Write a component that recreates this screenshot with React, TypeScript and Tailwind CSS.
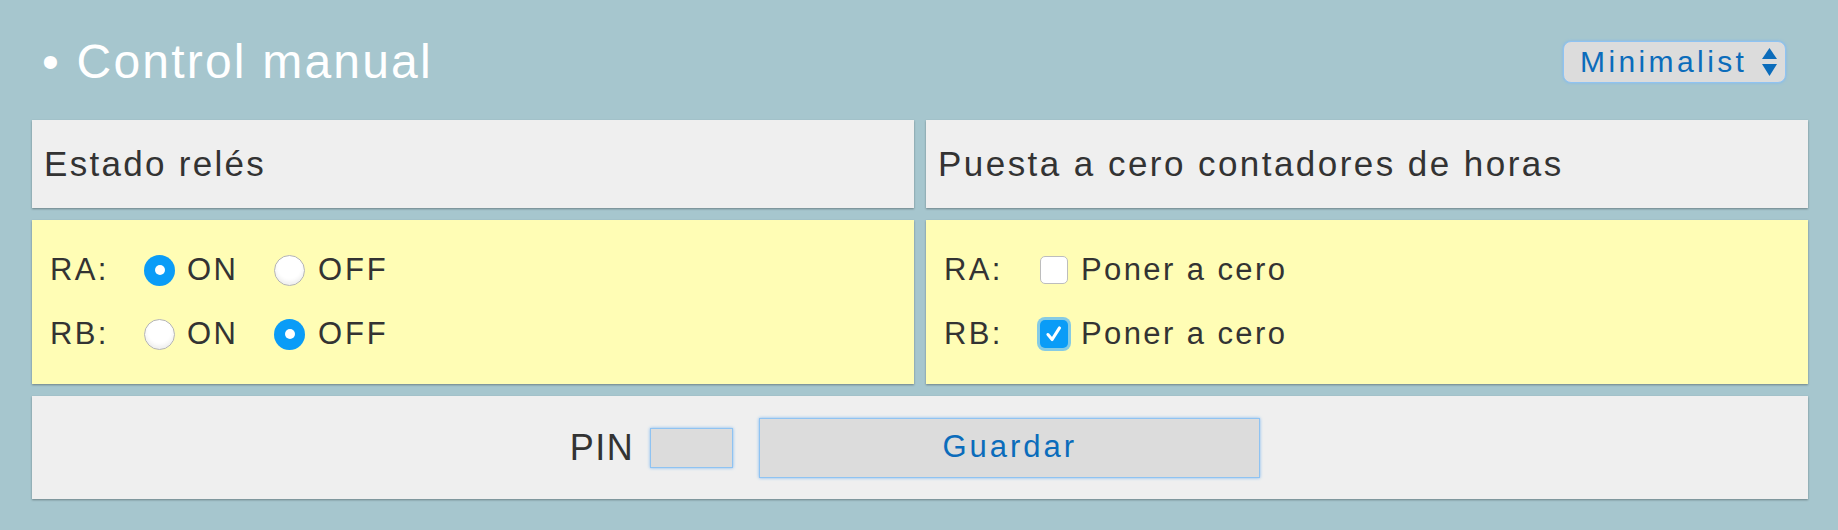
import { useState } from 'react';

function Radio({ checked }: { checked: boolean }) {
    if (checked) {
        return (
            <span className="w-[31px] h-[31px] rounded-full bg-[#0a9cf7] flex items-center justify-center shrink-0">
                <span className="w-[10px] h-[10px] rounded-full bg-white"></span>
            </span>
        );
    }
    return (
        <span className="w-[31px] h-[31px] rounded-full bg-white border border-[#b4b4b4] shadow-[inset_0_-3px_4px_rgba(0,0,0,0.07)] shrink-0"></span>
    );
}

function Checkbox({ checked }: { checked: boolean }) {
    if (checked) {
        return (
            <span className="w-[28px] h-[28px] rounded-[5px] bg-[#0a9cf7] ring-[3px] ring-[#86cbe4] flex items-center justify-center shrink-0">
                <svg width="22" height="22" viewBox="0 0 20 20" fill="none">
                    <path d="M4.5 10.5 L8.3 15 L15 4.5" stroke="white" strokeWidth="2.8" strokeLinecap="round" strokeLinejoin="round" />
                </svg>
            </span>
        );
    }
    return <span className="w-[28px] h-[28px] rounded-[5px] bg-white border border-[#bdbdbd] shrink-0"></span>;
}

export default function App() {
    const [relays] = useState([
        { label: 'RA:', on: true },
        { label: 'RB:', on: false },
    ]);
    const [resets] = useState([
        { label: 'RA:', checked: false },
        { label: 'RB:', checked: true },
    ]);

    return (
        <div className="w-full h-[530px] bg-[#a6c6ce] pl-[32px] pr-[30px] font-[family-name:Liberation_Sans,Arial,sans-serif] text-[#333]">
            <div className="h-[120px] pt-[4px] flex items-center justify-between pr-[22px]">
                <h1 className="pl-[10px] text-[48px] tracking-[2.2px] text-white leading-none">• Control manual</h1>
                <div className="w-[223px] h-[42px] rounded-[8px] bg-[#dcdcdc] border border-[#8fc3f2] shadow-[0_0_3px_#7fb8f0] flex items-center justify-between pl-[16px] pr-[8px]">
                    <span className="text-[30px] tracking-[3.4px] text-[#0b6cbb] leading-none">Minimalist</span>
                    <svg width="15" height="28" viewBox="0 0 15 28">
                        <path d="M7.5 0 L15 11 L0 11 Z" fill="#0b6cbb" />
                        <path d="M0 16 L15 16 L7.5 28 Z" fill="#0b6cbb" />
                    </svg>
                </div>
            </div>

            <div className="grid grid-cols-2 gap-[12px]">
                <div className="h-[88px] bg-[#efefef] shadow-[0_1px_2px_rgba(0,0,0,0.35)] flex items-center px-[12px]">
                    <h2 className="text-[35px] tracking-[2.3px]">Estado relés</h2>
                </div>
                <div className="h-[88px] bg-[#efefef] shadow-[0_1px_2px_rgba(0,0,0,0.35)] flex items-center px-[12px]">
                    <h2 className="text-[35px] tracking-[2.45px]">Puesta a cero contadores de horas</h2>
                </div>
            </div>

            <div className="grid grid-cols-2 gap-[12px] mt-[12px]">
                <div className="h-[164px] bg-[#fffdb5] shadow-[0_1px_2px_rgba(0,0,0,0.35)] flex flex-col justify-center gap-[24px] pl-[18px] text-[31px] tracking-[2.4px]">
                    {relays.map((r) => (
                        <div key={r.label} className="h-[40px] flex items-center">
                            <span className="w-[94px]">{r.label}</span>
                            <div className="w-[130px] flex items-center">
                                <Radio checked={r.on} />
                                <span className="ml-[12px]">ON</span>
                            </div>
                            <div className="flex items-center">
                                <Radio checked={!r.on} />
                                <span className="ml-[13px] tracking-[2.8px]">OFF</span>
                            </div>
                        </div>
                    ))}
                </div>
                <div className="h-[164px] bg-[#fffdb5] shadow-[0_1px_2px_rgba(0,0,0,0.35)] flex flex-col justify-center gap-[24px] pl-[18px] text-[31px] tracking-[2.4px]">
                    {resets.map((r) => (
                        <div key={r.label} className="h-[40px] flex items-center">
                            <span className="w-[96px]">{r.label}</span>
                            <Checkbox checked={r.checked} />
                            <span className="ml-[13px]">Poner a cero</span>
                        </div>
                    ))}
                </div>
            </div>

            <div className="h-[103px] mt-[12px] bg-[#efefef] shadow-[0_1px_2px_rgba(0,0,0,0.35)] flex items-center justify-center pr-[10px]">
                <span className="text-[36px] tracking-[1.5px]">PIN</span>
                <div className="ml-[16px] w-[83px] h-[40px] bg-[#dcdcdc] border border-[#8fc3f2] shadow-[0_0_3px_#7fb8f0]"></div>
                <button className="ml-[26px] w-[501px] h-[60px] bg-[#dcdcdc] border border-[#8fc3f2] shadow-[0_0_3px_#7fb8f0] text-[31px] tracking-[3px] text-[#0b6cbb]">
                    Guardar
                </button>
            </div>
        </div>
    );
}
